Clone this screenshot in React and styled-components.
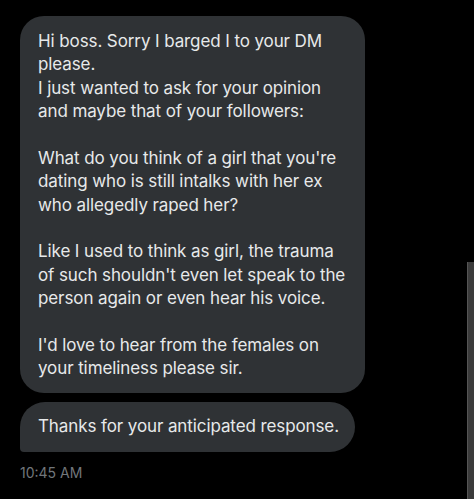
import React from "react";
import styled, { createGlobalStyle } from "styled-components";

const GlobalStyle = createGlobalStyle`
  html, body {
    margin: 0;
    padding: 0;
    background: #000;
    height: 100%;
    overflow: hidden;
  }
  #root {
    height: 100%;
  }
`;

const messages = [
  [
    "Hi boss. Sorry I barged I to your DM",
    "please.",
    "I just wanted to ask for your opinion",
    "and maybe that of your followers:",
    "",
    "What do you think of a girl that you're",
    "dating who is still intalks with her ex",
    "who allegedly raped her?",
    "",
    "Like I used to think as girl, the trauma",
    "of such shouldn't even let speak to the",
    "person again or even hear his voice.",
    "",
    "I'd love to hear from the females on",
    "your timeliness please sir.",
  ],
  ["Thanks for your anticipated response."],
];

const App = () => {
  return (
    <>
      <GlobalStyle />
      <Screen>
        <Thread>
          <Bubble $width={345} $radius={24}>
            {messages[0].map((line, i) => (
              <Line key={i}>{line || "\u00a0"}</Line>
            ))}
          </Bubble>
          <Bubble $width={335} $radius={25} $last>
            {messages[1].map((line, i) => (
              <Line key={i}>{line}</Line>
            ))}
          </Bubble>
          <Time>10:45 AM</Time>
        </Thread>
        <ScrollThumb />
      </Screen>
    </>
  );
};

const Screen = styled.div`
  position: relative;
  height: 100%;
  background: #000;
  font-family: Inter, "Noto Sans", sans-serif;
`;

const Thread = styled.div`
  display: flex;
  flex-direction: column;
  align-items: flex-start;
  gap: 9px;
  padding: 16px 0 0 20px;
`;

const Bubble = styled.div`
  box-sizing: border-box;
  width: ${(p) => p.$width}px;
  padding: ${(p) => (p.$last ? "13px 18px" : "14px 18px 13px")};
  background: #2f3235;
  color: #e7e9ea;
  border-radius: ${(p) => p.$radius}px;
  border-bottom-left-radius: ${(p) => (p.$last ? "4px" : `${p.$radius}px`)};
  font-size: 17px;
  line-height: 23.36px;
  letter-spacing: -0.1px;
`;

const Line = styled.div`
  white-space: nowrap;
`;

const Time = styled.div`
  margin-top: 3px;
  color: #71767b;
  font-size: 14px;
  line-height: 18px;
`;

const ScrollThumb = styled.div`
  position: absolute;
  top: 262px;
  right: 0;
  bottom: 0;
  width: 6px;
  background: #3b3b3b;
  border-left: 1px solid #555;
`;

export default App;
